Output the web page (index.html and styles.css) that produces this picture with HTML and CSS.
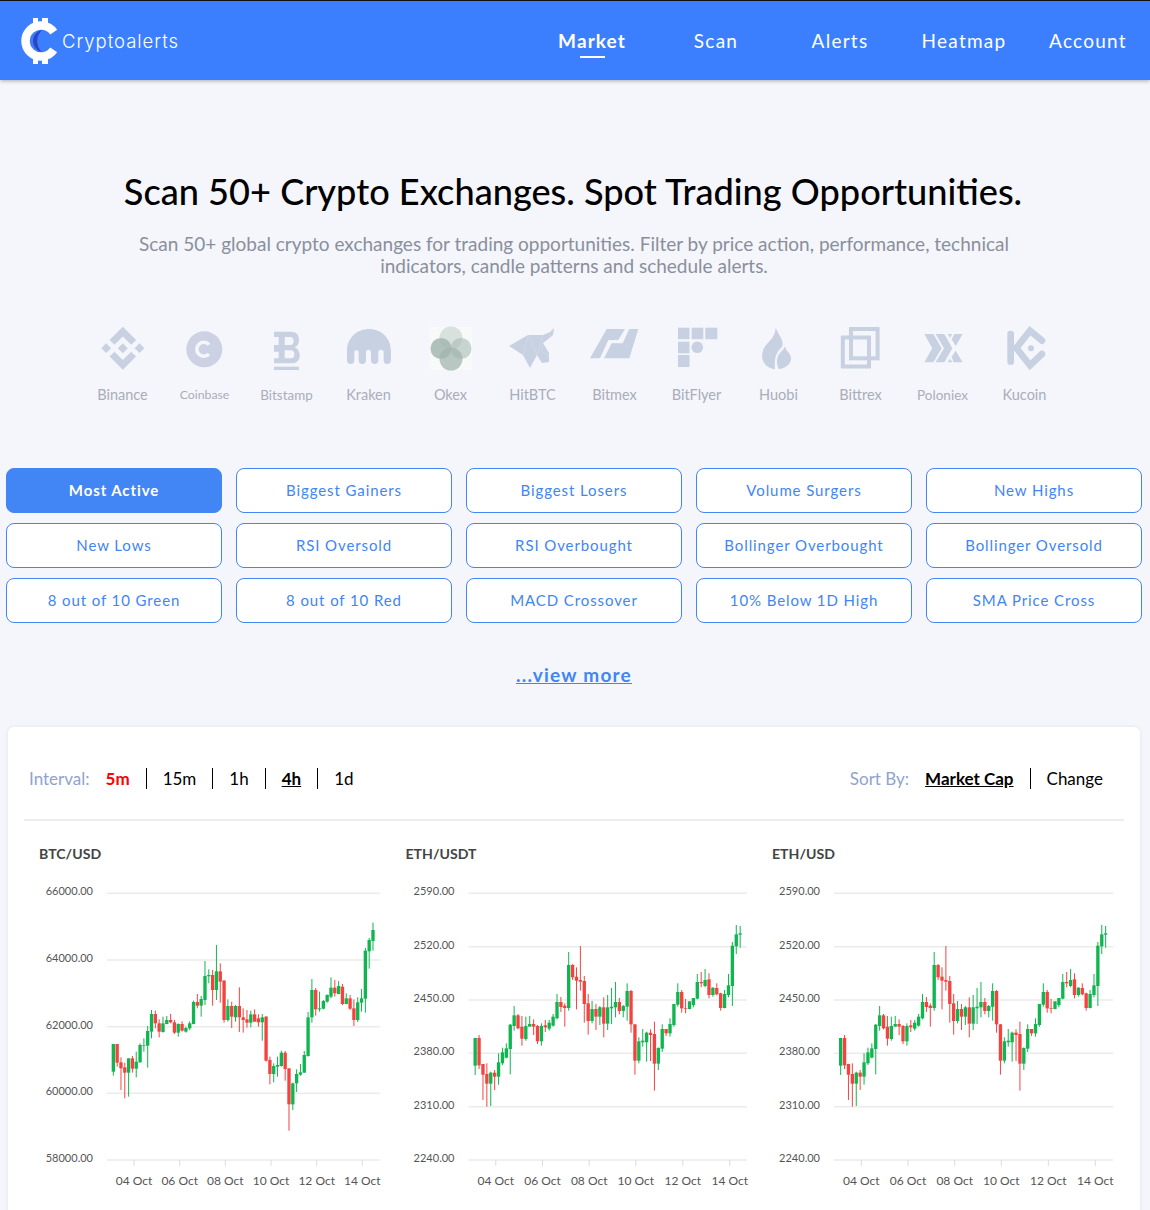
FILE: index.html
```html
<!DOCTYPE html>
<html lang="en">
<head>
  <meta charset="UTF-8">
  <meta name="viewport" content="width=device-width, initial-scale=1.0">
  <title>Cryptoalerts</title>
  <link rel="stylesheet" href="styles.css">
</head>
<body>
  <div class="navbar">
    <a class="brand" href="#">
      <svg class="brand-logo" width="40" height="48" viewBox="0 0 40 48">
        <rect x="13" y="1" width="5" height="7" fill="#fff"/>
        <rect x="22" y="1" width="6" height="7" fill="#fff"/>
        <rect x="13" y="40" width="5" height="7" fill="#fff"/>
        <rect x="22" y="40" width="6" height="7" fill="#fff"/>
        <path d="M33.7 15.1A15.5 15.5 0 1 0 33.7 32.9" fill="none" stroke="#fff" stroke-width="8.5"/>
        <path d="M22 13A11.2 11.2 0 0 0 22 35A15 15 0 0 1 22 13Z" fill="#2f45c4"/>
      </svg>
      <span class="brand-name">Cryptoalerts</span>
    </a>
    <div class="nav-links">
      <a class="nav-link active" href="#">Market</a>
      <a class="nav-link" href="#">Scan</a>
      <a class="nav-link" href="#">Alerts</a>
      <a class="nav-link" href="#">Heatmap</a>
      <a class="nav-link" href="#">Account</a>
    </div>
  </div>

  <div class="page">
    <div class="hero">
      <h1>Scan 50+ Crypto Exchanges. Spot Trading Opportunities.</h1>
      <p>Scan 50+ global crypto exchanges for trading opportunities. Filter by price action, performance, technical indicators, candle patterns and schedule alerts.</p>
    </div>

    <!-- Exchanges -->
    <div class="exchanges">
      <div class="exchange">
        <svg class="ex-icon" viewBox="0 0 46 46"><g transform="translate(1.3,0.7) scale(.34)"><path d="M38.73 53.2l24.59-24.58 24.6 24.6 14.3-14.31L63.32 0 24.42 38.9zM0 63.31l14.3-14.31 14.31 14.31-14.31 14.3zM38.73 73.41l24.59 24.59 24.6-24.6 14.31 14.29-38.9 38.91-38.91-38.88zM98 63.31l14.3-14.31 14.31 14.3-14.31 14.3zM77.83 63.3L63.32 48.78 52.59 59.51l-1.24 1.23-2.54 2.54 14.51 14.5 14.51-14.47z"/></g></svg>
        <span class="ex-name">Binance</span>
      </div>
      <div class="exchange">
        <svg class="ex-icon coinbase" viewBox="0 0 46 46"><circle cx="22.3" cy="23.3" r="18"/><path class="cut" d="M27 18.6A7 7 0 1 0 27 28"/></svg>
        <span class="ex-name small">Coinbase</span>
      </div>
      <div class="exchange">
        <svg class="ex-icon" viewBox="0 0 46 46"><g transform="translate(-184.3,-11) scale(.3333)"><path fill-rule="evenodd" d="M583 50H635C652 50 658 62 658 74C658 86 652 94 645 97C654 100 660 110 660 122C660 136 650 145 635 145H583V130H597V110H583V90H597V66H583ZM615 66V90H632C640 90 642 84 642 78C642 70 638 66 632 66ZM615 106V130H634C642 130 644 124 644 118C644 110 640 106 634 106Z"/><rect x="583" y="155" width="75" height="10"/></g></svg>
        <span class="ex-name mid">Bitstamp</span>
      </div>
      <div class="exchange">
        <svg class="ex-icon" viewBox="0 0 46 46"><g transform="translate(-266,-11) scale(.3333)"><path d="M801 108C801 70 830 42 867 42C904 42 933 70 933 108V136A11 11 0 0 1 911 136V112A8 8 0 0 0 895 112V136A11 11 0 0 1 873 136V112A7.5 7.5 0 0 0 858 112V136A11 11 0 0 1 836 136V112A6.5 6.5 0 0 0 823 112V136A11 11 0 0 1 801 136Z"/></g></svg>
        <span class="ex-name">Kraken</span>
      </div>
      <div class="exchange">
        <svg class="ex-icon okex" viewBox="0 0 46 46">
          <rect x="2" y="1" width="42" height="43" fill="#f8fafa"/>
          <circle cx="23" cy="12" r="11.5" fill="#a9bbb6" opacity=".4"/>
          <circle cx="13" cy="22.5" r="10.5" fill="#a3b5af" opacity=".85"/>
          <circle cx="33" cy="22.5" r="10.5" fill="#a9bbb6" opacity=".6"/>
          <circle cx="23" cy="33" r="11.5" fill="#a3b5af" opacity=".75"/>
        </svg>
        <span class="ex-name">Okex</span>
      </div>
      <div class="exchange">
        <svg class="ex-icon hitbtc" viewBox="0 0 46 46">
          <polygon points="-1,20 18,9 33,9 40,6 44,2 43,9 37,14 33,17 39,27 39,36 32,37 27,29 20,42 13,29"/>
          <path class="facet" d="M18 9L13 29M18 9L27 29M33 9L27 29M33 17L32 26L39 30"/>
        </svg>
        <span class="ex-name">HitBTC</span>
      </div>
      <div class="exchange">
        <svg class="ex-icon" viewBox="0 0 46 46"><polygon points="14.7,3 33,3 26.3,14 16.3,14 8,32.3 -2,32.3"/><polygon points="37.3,3 46.3,3 37.3,32.3 12,32.3 19.7,17.3 30.7,17.3"/></svg>
        <span class="ex-name">Bitmex</span>
      </div>
      <div class="exchange">
        <svg class="ex-icon" viewBox="0 0 46 46">
          <rect x="4" y="1.7" width="11.5" height="11.5"/><rect x="17.7" y="1.7" width="11.6" height="11.5"/><rect x="31.3" y="1.7" width="12" height="11.5"/>
          <rect x="4" y="15.7" width="11.5" height="11.6"/><circle cx="23.3" cy="21.3" r="5.8"/>
          <rect x="4" y="29" width="11.5" height="12"/>
        </svg>
        <span class="ex-name">BitFlyer</span>
      </div>
      <div class="exchange">
        <svg class="ex-icon" viewBox="0 0 46 46"><g transform="translate(-1,-6) scale(.3333)"><path d="M62 22C70 48 90 60 80 82C70 92 56 105 60 148C35 145 18 125 22 100C26 70 62 60 62 22Z"/><path d="M90 78C92 95 110 100 108 118C106 135 88 146 72 148C60 125 68 105 78 95C84 90 88 85 90 78Z"/></g></svg>
        <span class="ex-name">Huobi</span>
      </div>
      <div class="exchange">
        <svg class="ex-icon bittrex" viewBox="0 0 46 46"><rect x="13" y="3" width="26.6" height="29.3"/><rect x="4.8" y="11.5" width="26.2" height="29"/></svg>
        <span class="ex-name">Bittrex</span>
      </div>
      <div class="exchange">
        <svg class="ex-icon" viewBox="0 0 46 46"><g transform="translate(-5,-6) scale(.3333)">
          <polygon points="28,42 55,42 80,85 55,127 28,127 52,85"/>
          <polygon points="62,42 88,42 112,85 88,127 62,127 87,85"/>
          <polygon points="118,42 143,42 122,78 110,58"/>
          <polygon points="122,92 143,127 116,127 110,110"/>
          <polygon points="98,42 112,42 105,53"/>
          <polygon points="98,127 112,127 105,116"/>
        </g></svg>
        <span class="ex-name poloniex">Poloniex</span>
      </div>
      <div class="exchange">
        <svg class="ex-icon kucoin" viewBox="0 0 46 46"><g transform="translate(-87,-6) scale(.3333)"><path class="line" d="M287 42V125"/><path class="line" d="M381 62L345 32L304 84L345 136L381 102"/><circle cx="348" cy="85" r="9"/></g></svg>
        <span class="ex-name">Kucoin</span>
      </div>
    </div>

    <!-- Scan presets -->
    <div class="presets">
      <a class="preset active" href="#">Most Active</a>
      <a class="preset" href="#">Biggest Gainers</a>
      <a class="preset" href="#">Biggest Losers</a>
      <a class="preset" href="#">Volume Surgers</a>
      <a class="preset" href="#">New Highs</a>
      <a class="preset" href="#">New Lows</a>
      <a class="preset" href="#">RSI Oversold</a>
      <a class="preset" href="#">RSI Overbought</a>
      <a class="preset" href="#">Bollinger Overbought</a>
      <a class="preset" href="#">Bollinger Oversold</a>
      <a class="preset" href="#">8 out of 10 Green</a>
      <a class="preset" href="#">8 out of 10 Red</a>
      <a class="preset" href="#">MACD Crossover</a>
      <a class="preset" href="#">10% Below 1D High</a>
      <a class="preset" href="#">SMA Price Cross</a>
    </div>

    <div class="view-more"><a href="#">...view more</a></div>

    <!-- Charts -->
    <div class="card">
      <div class="toolbar">
        <div class="filter">
          <span class="filter-label">Interval:</span>
          <a class="filter-item first red" href="#">5m</a>
          <a class="filter-item" href="#">15m</a>
          <a class="filter-item" href="#">1h</a>
          <a class="filter-item selected" href="#">4h</a>
          <a class="filter-item last" href="#">1d</a>
        </div>
        <div class="filter">
          <span class="filter-label">Sort By:</span>
          <a class="filter-item first selected" href="#">Market Cap</a>
          <a class="filter-item last" href="#">Change</a>
        </div>
      </div>
      <div class="charts">
        <div class="chart">
          <div class="chart-title">BTC/USD</div>
          <svg class="chart-svg" id="chartBtc" width="367" height="320" viewBox="0 0 367 320"></svg>
        </div>
        <div class="chart">
          <div class="chart-title">ETH/USDT</div>
          <svg class="chart-svg" id="chartEthUsdt" width="367" height="320" viewBox="0 0 367 320"></svg>
        </div>
        <div class="chart">
          <div class="chart-title">ETH/USD</div>
          <svg class="chart-svg" id="chartEthUsd" width="367" height="320" viewBox="0 0 367 320"></svg>
        </div>
      </div>
    </div>
  </div>

  <script src="chart.js"></script>
</body>
</html>
```

FILE: styles.css
```css
html {
  overflow: hidden;
}

body {
  margin: 0;
  font-family: "Lato", "Liberation Sans", sans-serif;
  background: #f4f6fb;
  color: #000;
}

a {
  text-decoration: none;
}

.navbar {
  display: flex;
  align-items: center;
  justify-content: space-between;
  box-sizing: border-box;
  height: 80px;
  padding: 0 0 0 20px;
  border-top: 1px solid #111;
  background: #3b7fff;
  box-shadow: 0 1px 4px rgba(0, 0, 0, 0.3);
}

.brand {
  display: flex;
  align-items: center;
  color: #fff;
}

.brand-name {
  margin-left: 2px;
  font-family: "Inter", sans-serif;
  font-size: 18.5px;
  font-weight: 300;
  letter-spacing: 0.97px;
}

.nav-links {
  display: flex;
}

.nav-link {
  position: relative;
  width: 124px;
  text-align: center;
  color: #fff;
  font-size: 19px;
  letter-spacing: 1.25px;
}

.nav-link.active {
  font-weight: 700;
  letter-spacing: 1.1px;
}

.nav-link.active::after {
  content: "";
  position: absolute;
  left: 50px;
  bottom: -6px;
  width: 25px;
  height: 2px;
  background: #fff;
}

.page {
  width: 1148px;
}

.hero {
  padding-top: 89px;
  text-align: center;
}

.hero h1 {
  margin: 0;
  padding-right: 2px;
  font-size: 36.15px;
  line-height: 44px;
  font-weight: 500;
}

.hero p {
  width: 900px;
  margin: 20px auto 0;
  font-size: 19px;
  line-height: 22px;
  color: #8a8f9c;
}

.exchanges {
  display: flex;
  justify-content: center;
  margin: 49px 0 0 -1px;
}

.exchange {
  display: flex;
  flex-direction: column;
  align-items: center;
  width: 82px;
}

.ex-icon {
  width: 46px;
  height: 46px;
  overflow: visible;
  fill: #c7d1e1;
}

.coinbase {
  fill: #ccd2e4;
}

.coinbase .cut {
  fill: none;
  stroke: #f4f6fb;
  stroke-width: 3.5;
}

.hitbtc .facet {
  fill: none;
  stroke: #d6deea;
  stroke-width: 0.6;
}

.bittrex rect {
  fill: none;
  stroke: #c7d1e1;
  stroke-width: 4;
}

.kucoin .line {
  fill: none;
  stroke: #c7d1e1;
  stroke-width: 20;
  stroke-linecap: round;
  stroke-linejoin: miter;
}

.ex-name {
  display: block;
  height: 20px;
  margin-top: 13px;
  font-size: 14.5px;
  line-height: 20px;
  color: #a9adba;
}

.ex-name.mid {
  font-size: 13.4px;
}

.ex-name.small {
  font-size: 12.3px;
}

.ex-name.poloniex {
  font-size: 13.5px;
}

.presets {
  display: grid;
  grid-template-columns: repeat(5, 216px);
  column-gap: 14px;
  row-gap: 10px;
  margin: 63px 0 0 6px;
}

.preset {
  box-sizing: border-box;
  height: 45px;
  border: 1px solid #4285f4;
  border-radius: 8px;
  background: #fff;
  text-align: center;
  color: #4285f4;
  font-size: 15px;
  line-height: 43px;
  letter-spacing: 0.9px;
}

.preset.active {
  background: #4285f4;
  color: #fff;
  font-weight: 700;
}

.view-more {
  margin-top: 40px;
  text-align: center;
  line-height: 24px;
}

.view-more a {
  color: #4285f4;
  font-size: 19px;
  font-weight: 700;
  letter-spacing: 1.25px;
  text-decoration: underline;
}

.card {
  box-sizing: border-box;
  width: 1132px;
  margin: 39px 0 0 8px;
  padding: 0 16px 20px;
  border-radius: 6px;
  background: #fff;
  box-shadow: 0 0 4px rgba(0, 0, 0, 0.08);
}

.toolbar {
  display: flex;
  align-items: center;
  justify-content: space-between;
  box-sizing: border-box;
  height: 94px;
  padding: 10px 21px 0 5px;
  border-bottom: 2px solid #eee;
}

.filter {
  display: flex;
  align-items: center;
}

.filter-label {
  margin-right: 16px;
  font-size: 17px;
  color: #8fa3cf;
}

.filter-item {
  padding: 0 16px;
  border-right: 1px solid #000;
  color: #000;
  font-size: 17px;
  line-height: 21px;
}

.filter-item.first {
  padding-left: 0;
}

.filter-item.last {
  padding-right: 0;
  border-right: none;
}

.filter-item.red {
  color: #f00;
  font-weight: 700;
}

.filter-item.selected {
  font-weight: 700;
  text-decoration: underline;
}

.charts {
  display: grid;
  grid-template-columns: repeat(3, 366.5px);
}

.chart-title {
  height: 59px;
  padding: 23px 0 0 15px;
  box-sizing: border-box;
  color: #444;
  font-size: 14.1px;
  font-weight: 700;
  line-height: 20px;
}

.chart-svg {
  display: block;
}

.grid-line {
  stroke: #ebebeb;
  stroke-width: 1.4;
}

.tick-line {
  stroke: #dcdcdc;
  stroke-width: 1;
}

.axis-label {
  fill: #555;
  font-size: 12px;
}

.price-label {
  fill: #555;
  font-size: 11px;
}

.up {
  fill: #0fb64f;
  stroke: #0fb64f;
}

.down {
  fill: #f4433f;
  stroke: #f4433f;
}
```

FILE: chart.js
```js
// candles are [up, bodyTop, bodyBottom, wickTop, wickBottom], in 3x chart pixels
var btc = [
  [1,492,575,492,587],[0,492,548,492,560],[0,547,565,532,630],[0,562,578,548,655],[1,535,578,535,650],
  [0,535,566,528,578],[1,545,566,515,592],[1,495,547,490,548],[1,495,497,475,515],[1,453,497,438,563],
  [1,402,455,390,475],[0,402,430,392,445],[0,430,455,418,472],[1,430,456,410,458],[1,420,432,408,433],
  [0,420,427,402,430],[0,427,458,420,462],[1,432,458,430,470],[0,432,452,424,455],[1,444,455,440,458],
  [1,430,445,424,450],[1,366,432,362,433],[0,366,377,342,385],[1,357,377,348,410],[1,288,360,243,375],
  [1,285,289,268,310],[0,285,330,270,377],[1,274,330,195,360],[0,274,305,250,368],[0,302,420,300,428],
  [1,378,420,358,425],[0,378,410,365,444],[1,378,412,375,425],[0,378,412,322,456],[0,412,420,385,458],
  [0,418,428,390,443],[1,403,428,392,442],[0,403,425,388,425],[0,415,427,403,440],[1,412,427,402,482],
  [0,410,542,408,545],[0,540,582,530,613],[1,558,582,550,607],[1,555,560,530,590],[1,518,558,512,560],
  [0,518,567,513,602],[0,565,673,565,752],[1,610,673,608,690],[1,582,610,568,636],[1,577,584,552,587],
  [1,525,578,513,578],[1,412,528,396,530],[1,330,412,297,428],[0,330,388,324,407],[1,385,388,335,395],
  [1,363,386,360,388],[1,345,365,343,368],[1,323,350,292,355],[0,323,340,300,350],[1,318,342,303,343],
  [0,320,372,312,375],[1,355,372,340,373],[0,355,386,345,390],[0,385,420,358,438],[1,367,420,352,426],
  [1,355,368,327,395],[1,212,356,204,398],[1,180,214,174,266],[1,150,183,128,212]
];

var eth = [
  [1,474,557,474,585],[0,474,556,465,567],[0,552,584,552,660],[0,582,611,550,680],[1,578,611,575,678],
  [0,578,590,570,630],[1,547,590,520,614],[1,517,550,503,555],[1,505,533,490,535],[1,434,507,432,583],
  [1,406,438,378,452],[0,406,445,402,448],[0,440,476,408,497],[1,438,477,410,482],[1,432,440,408,440],
  [0,432,440,418,465],[0,438,484,435,492],[1,438,484,430,497],[0,436,442,420,456],[1,428,446,420,452],
  [1,410,437,402,440],[1,366,415,342,418],[0,366,381,351,396],[0,377,384,370,440],[1,255,384,216,392],
  [0,255,292,252,300],[0,290,302,262,388],[0,300,305,198,332],[0,303,372,288,428],[0,370,423,342,464],
  [1,387,423,363,430],[0,387,410,372,450],[1,382,410,378,435],[0,382,431,352,472],[1,382,431,345,450],
  [1,380,385,324,432],[1,366,382,306,412],[0,366,393,354,403],[1,378,393,375,412],[1,333,380,310,422],
  [0,333,433,330,458],[0,433,542,432,584],[1,484,542,472,550],[1,482,487,447,500],[1,458,487,455,545],
  [0,458,465,448,543],[0,462,551,425,632],[1,504,551,502,570],[1,447,506,433,516],[0,447,460,447,468],
  [1,432,460,415,470],[1,372,435,372,440],[1,336,374,310,380],[0,336,385,330,398],[0,384,386,357,400],
  [1,364,387,364,388],[1,354,375,354,382],[1,306,356,282,358],[0,306,310,276,322],[1,300,318,267,322],
  [0,298,345,280,355],[1,323,345,322,350],[0,324,343,310,346],[0,340,384,338,392],[1,342,384,330,385],
  [1,316,345,282,352],[1,197,318,186,378],[1,163,199,135,222],[1,160,164,138,203]
];

var dates = ['04 Oct', '06 Oct', '08 Oct', '10 Oct', '12 Oct', '14 Oct'];

function drawChart(id, opts) {
  var html = '';

  opts.grid.forEach(function (g) {
    html += '<line class="grid-line" x1="' + opts.left + '" x2="356" y1="' + g.y + '" y2="' + g.y + '"/>';
    html += '<text class="price-label" text-anchor="end" x="' + opts.labelRight + '" y="' + (g.y + 2) + '">' + g.label + '</text>';
  });

  opts.ticks.forEach(function (x, i) {
    html += '<line class="tick-line" x1="' + x + '" x2="' + x + '" y1="280" y2="286"/>';
    html += '<text class="axis-label" text-anchor="middle" x="' + x + '" y="305">' + dates[i] + '</text>';
  });

  html += '<g transform="translate(' + opts.shift + ',0) scale(0.33333)">';
  var step = (opts.lastX - opts.firstX) / (opts.data.length - 1);
  opts.data.forEach(function (c, i) {
    var x = opts.firstX + i * step;
    var cls = c[0] ? 'up' : 'down';
    html += '<line class="' + cls + '" stroke-width="3" x1="' + x + '" x2="' + x + '" y1="' + c[3] + '" y2="' + c[4] + '"/>';
    html += '<rect class="' + cls + '" stroke-width="0" x="' + (x - 5) + '" width="10" y="' + c[1] + '" height="' + (c[2] - c[1]) + '"/>';
  });
  html += '</g>';

  document.getElementById(id).innerHTML = html;
}

function labels(ys, values) {
  return ys.map(function (y, i) {
    return { y: y, label: values[i] };
  });
}

var ethGrid = labels([13.3, 66.7, 120, 173.3, 226.7, 280],
  ['2590.00', '2520.00', '2450.00', '2380.00', '2310.00', '2240.00']);

drawChart('chartBtc', {
  data: btc, firstX: 250, lastX: 1029, shift: 6, left: 83, labelRight: 69,
  grid: labels([13.3, 80, 146.7, 213.3, 280], ['66000.00', '64000.00', '62000.00', '60000.00', '58000.00']),
  ticks: [110, 155.7, 201.3, 247, 292.7, 338.3]
});

drawChart('chartEthUsdt', {
  data: eth, firstX: 224, lastX: 1019, shift: 9.5, left: 77.5, labelRight: 63.5,
  grid: ethGrid,
  ticks: [104.8, 151.5, 198.2, 244.8, 291.8, 338.8]
});

drawChart('chartEthUsd', {
  data: eth, firstX: 224, lastX: 1019, shift: 9, left: 77, labelRight: 63,
  grid: ethGrid,
  ticks: [104.3, 151, 197.7, 244.3, 291.3, 338.3]
});
```
